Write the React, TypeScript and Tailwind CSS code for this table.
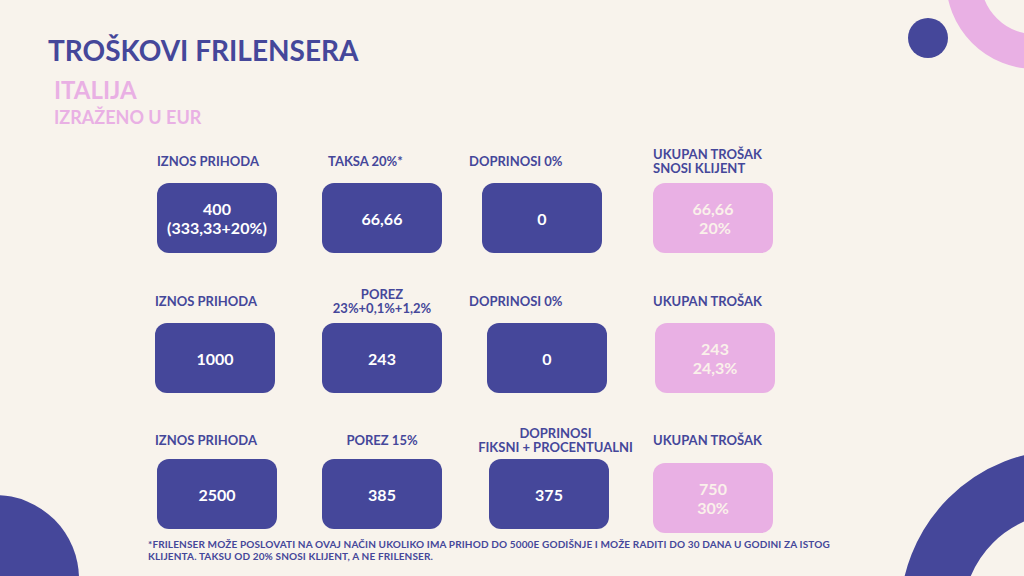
import React from 'react';

type Cell = {
  label: string[];
  labelClass: string;
  boxClass: string;
  value: string[];
  pink?: boolean;
};

type Row = {
  rowClass: string;
  boxGap: string;
  pinkShift: string;
  cells: Cell[];
};

const rows: Row[] = [
  {
    rowClass: 'mt-[22px]',
    boxGap: 'mt-[9px]',
    pinkShift: '',
    cells: [
      { label: ['IZNOS PRIHODA'], labelClass: 'justify-start', boxClass: 'ml-[157px]', value: ['400', '(333,33+20%)'] },
      { label: ['TAKSA 20%*'], labelClass: 'justify-start pl-[6px]', boxClass: 'ml-[45px]', value: ['66,66'] },
      { label: ['DOPRINOSI 0%'], labelClass: 'justify-start -ml-[13px]', boxClass: 'ml-[40px]', value: ['0'] },
      { label: ['UKUPAN TROŠAK', 'SNOSI KLIJENT'], labelClass: 'justify-start', boxClass: 'ml-[51px]', value: ['66,66', '\u00a020%'], pink: true },
    ],
  },
  {
    rowClass: 'mt-[35px]',
    boxGap: 'mt-[9px]',
    pinkShift: '',
    cells: [
      { label: ['IZNOS PRIHODA'], labelClass: 'justify-start', boxClass: 'ml-[155px]', value: ['1000'] },
      { label: ['POREZ', '23%+0,1%+1,2%'], labelClass: 'justify-center text-center', boxClass: 'ml-[47px]', value: ['243'] },
      { label: ['DOPRINOSI 0%'], labelClass: 'justify-start -ml-[18px]', boxClass: 'ml-[45px]', value: ['0'] },
      { label: ['UKUPAN TROŠAK'], labelClass: 'justify-start -ml-[2px]', boxClass: 'ml-[48px]', value: ['243', '24,3%'], pink: true },
    ],
  },
  {
    rowClass: 'mt-[34px]',
    boxGap: 'mt-[6px]',
    pinkShift: 'mt-[4px]',
    cells: [
      { label: ['IZNOS PRIHODA'], labelClass: 'justify-start -ml-[2px]', boxClass: 'ml-[157px]', value: ['2500'] },
      { label: ['POREZ 15%'], labelClass: 'justify-center text-center', boxClass: 'ml-[45px]', value: ['385'] },
      { label: ['DOPRINOSI', 'FIKSNI + PROCENTUALNI'], labelClass: 'justify-center text-center pl-[13px]', boxClass: 'ml-[47px]', value: ['375'] },
      { label: ['UKUPAN TROŠAK'], labelClass: 'justify-start', boxClass: 'ml-[44px]', value: ['750', '30%'], pink: true },
    ],
  },
];

function ValueBox({ cell, shift }: { cell: Cell; shift: string }) {
  return (
    <div
      className={
        cell.pink
          ? `${shift} h-[70px] w-[120px] rounded-[12px] bg-[#e9b0e4] text-[#faf1ea] flex flex-col items-center justify-center text-[16px] font-bold leading-[19px]`
          : 'h-[70px] w-[120px] rounded-[12px] bg-[#45479a] text-white flex flex-col items-center justify-center text-[16px] font-bold leading-[19px]'
      }
    >
      {cell.value.map(v => (
        <div key={v} className="whitespace-pre">
          {v}
        </div>
      ))}
    </div>
  );
}

export default function App() {
  return (
    <div
      className="relative w-[1024px] h-[576px] overflow-hidden bg-[#f8f3ec] text-[#45479a]"
      style={{ fontFamily: 'Lato, "Open Sans", sans-serif' }}
    >
      {/* decorations */}
      <div className="absolute left-[908px] top-[18px] w-[40px] h-[40px] rounded-full bg-[#45479a]" />
      <div className="absolute left-[946px] top-[-109px] w-[178px] h-[178px] rounded-full border-[35px] border-[#e9b0e4]" />
      <div className="absolute left-[-89px] top-[495px] w-[168px] h-[168px] rounded-full bg-[#45479a]" />
      <div className="absolute left-[900px] top-[450px] w-[330px] h-[330px] rounded-full border-[63px] border-[#45479a]" />

      <div className="relative flex flex-col">
        <div className="pt-[36px] pl-[48px] text-[28px] leading-[28px] font-bold">TROŠKOVI FRILENSERA</div>
        <div className="mt-[14px] pl-[54px] text-[24px] leading-[24px] font-bold text-[#e9b0e4]">ITALIJA</div>
        <div className="mt-[6px] pl-[54px] text-[18px] leading-[18px] font-bold text-[#e9b0e4]">IZRAŽENO U EUR</div>

        {rows.map((row, i) => (
          <div key={i} className={`flex items-start ${row.rowClass}`}>
            {row.cells.map((cell, j) => (
              <div key={j} className={`flex flex-col w-[120px] ${cell.boxClass}`}>
                <div className={`h-[26px] flex items-center whitespace-nowrap ${cell.labelClass}`}>
                  <div className="text-[13px] leading-[14px] font-bold">
                    {cell.label.map(l => (
                      <div key={l}>{l}</div>
                    ))}
                  </div>
                </div>
                <div className={row.boxGap}>
                  <ValueBox cell={cell} shift={row.pinkShift} />
                </div>
              </div>
            ))}
          </div>
        ))}

        <div className="mt-[5px] pl-[148px] pr-[130px] text-[10px] leading-[12px] font-bold tracking-[0.14px]">
          <div>*FRILENSER MOŽE POSLOVATI NA OVAJ NAČIN UKOLIKO IMA PRIHOD DO 5000E GODIŠNJE I MOŽE RADITI DO 30 DANA U GODINI ZA ISTOG</div>
          <div>KLIJENTA. TAKSU OD 20% SNOSI KLIJENT, A NE FRILENSER.</div>
        </div>
      </div>
    </div>
  );
}
